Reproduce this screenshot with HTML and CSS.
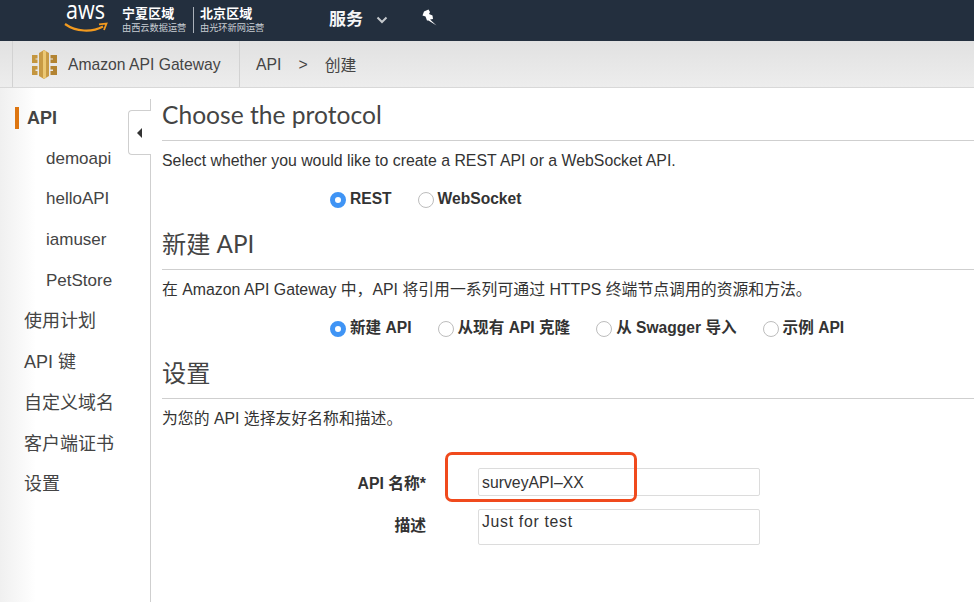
FILE: index.html
```html
<!DOCTYPE html>
<html lang="zh">
<head>
<meta charset="utf-8">
<title>Amazon API Gateway</title>
<link rel="stylesheet" href="styles.css">
</head>
<body>
<header class="topbar">
  <svg class="logo" width="44" height="41" viewBox="0 0 44 41">
    <text class="logo-text" x="2" y="18.500" textLength="39" lengthAdjust="spacingAndGlyphs">aws</text>
    <path d="M1 24C12 32 28 32.500 39 26.500" fill="none" stroke="#f29a1f" stroke-width="2.200"/>
    <path d="M35 24.300L42.500 23.500L40 30" fill="none" stroke="#f29a1f" stroke-width="1.800"/>
  </svg>
  <div class="region"><strong>宁夏区域</strong><small>由西云数据运营</small></div>
  <div class="region region-b"><strong>北京区域</strong><small>由光环新网运营</small></div>
  <div class="services">服务</div>
  <svg class="chev" width="12" height="8" viewBox="0 0 12 8"><path d="M1.500 1.500L6 6L10.500 1.500" fill="none" stroke="#c4c8cc" stroke-width="2"/></svg>
  <svg class="pin" width="15" height="17" viewBox="0 0 15 17"><path d="M2 2.500L6.500 0.500L8 3L7 5L10.500 6.500L11 10L8 10.500L14.500 16.500L6.500 11.500L5 11.500L3.500 7.500L0.500 6.500Z" fill="#fff"/></svg>
</header>
<nav class="subbar">
  <div class="brand">
    <svg class="gw" width="25" height="29" viewBox="0 0 25 29">
      <path d="M7 3L12 0L17 3V26L12 29L7 26Z" fill="#c89b45"/>
      <path d="M11 1L12 0L14 1.500V27.500L12 29L11 28Z" fill="#ecc873"/>
      <path d="M0 5H5.500V8.500H3.500V9.500H5.500V13H0Z" fill="#c4963f"/>
      <path d="M0 16H5.500V19.500H3.500V21H5.500V25H0Z" fill="#c4963f"/>
      <path d="M25 5H18.500V8.500H21V9.500H18.500V13H25Z" fill="#b38432"/>
      <path d="M25 16H18.500V19.500H21V21H18.500V25H25Z" fill="#b38432"/>
    </svg>
    <span>Amazon API Gateway</span>
  </div>
  <div class="crumbs"><span>API</span><span class="sep">&gt;</span><span>创建</span></div>
</nav>
<div class="content">
  <aside class="sidebar">
    <a class="item active">API</a>
    <a class="item sub">demoapi</a>
    <a class="item sub">helloAPI</a>
    <a class="item sub">iamuser</a>
    <a class="item sub">PetStore</a>
    <a class="item">使用计划</a>
    <a class="item">API 键</a>
    <a class="item">自定义域名</a>
    <a class="item">客户端证书</a>
    <a class="item">设置</a>
    <div class="handle"><i></i></div>
  </aside>
  <main class="main">
    <section class="sec sec-first">
      <h2 class="latin">Choose the protocol</h2>
      <p>Select whether you would like to create a REST API or a WebSocket API.</p>
      <div class="radios">
        <label class="radio on">REST</label>
        <label class="radio">WebSocket</label>
      </div>
    </section>
    <section class="sec">
      <h2>新建 API</h2>
      <p>在 Amazon API Gateway 中，API 将引用一系列可通过 HTTPS 终端节点调用的资源和方法。</p>
      <div class="radios">
        <label class="radio on">新建 API</label>
        <label class="radio">从现有 API 克隆</label>
        <label class="radio">从 Swagger 导入</label>
        <label class="radio">示例 API</label>
      </div>
    </section>
    <section class="sec">
      <h2>设置</h2>
      <p>为您的 API 选择友好名称和描述。</p>
      <div class="form">
        <div class="row">
          <label class="lab">API 名称*</label>
          <div class="field input">surveyAPI–XX</div>
        </div>
        <div class="row row-b">
          <label class="lab lab-b">描述</label>
          <div class="field area">Just for test</div>
        </div>
        <div class="mark"></div>
      </div>
    </section>
  </main>
</div>
</body>
</html>
```
FILE: styles.css
```css
*, *::before, *::after { box-sizing: border-box; }
html, body { margin: 0; height: 100%; overflow: hidden; }
body {
  width: 974px; height: 602px; background: #fff; color: #333;
  font-family: "Liberation Sans", "Noto Sans CJK SC", sans-serif; font-size: 16px;
}
.topbar {
  height: 41px; background: #232f3e; display: flex; align-items: center;
  padding-left: 64px; color: #fff;
}
.logo { flex: none; margin-right: 14px; }
.logo-text { font: 400 25px "Open Sans", sans-serif; fill: #fff; }
.region { display: flex; flex-direction: column; width: 71px; line-height: 1; height: 26px; margin-top: -1px; }
.region strong { font-size: 13px; font-weight: 700; letter-spacing: .1px; margin-bottom: 4px; }
.region small { font-size: 9.200px; color: #c9ced4; white-space: nowrap; }
.region-b { padding-left: 6px; border-left: 1px solid #aab1b9; width: 78px; }
.services { font-size: 17px; font-weight: 700; margin-left: 58px; color: #f4f5f6; margin-top: -6px; }
.chev { margin-left: 13px; margin-top: -2px; }
.pin { margin-left: 34px; margin-top: -6px; }

.subbar {
  height: 47px; display: flex; align-items: stretch;
  background: linear-gradient(#e1e1e1, #ededed); border-bottom: 1px solid #d8d8d8;
  padding-left: 12px; color: #444;
}
.brand {
  width: 228px; display: flex; align-items: center; gap: 11px; padding-left: 19px;
  border-left: 1px solid #d2d2d2; border-right: 1px solid #d2d2d2;
  font-size: 15.700px;
}
.brand span { margin-top: 1px; }
.crumbs { display: flex; align-items: center; padding: 1px 0 0 16px; font-size: 15.800px; }
.crumbs .sep { margin: 0 17px; }

.content { display: flex; height: 514px; }
.sidebar {
  width: 151px; flex: none; position: relative; padding-top: 10px;
  background: linear-gradient(90deg, #f0f0f0, #fff 36px);
}
.sidebar::after {
  content: ""; position: absolute; right: 0; top: 11px; bottom: 0; width: 1px; background: #cfcfcf;
}
.item {
  display: block; height: 40.700px; line-height: 40px; padding-left: 24px;
  font-size: 18px; color: #444; white-space: nowrap;
}
.item.sub { padding-left: 46px; font-size: 17px; }
.item.active { font-weight: 700; padding-left: 27px; position: relative; }
.item.active::before {
  content: ""; position: absolute; left: 15px; top: 9px; width: 4px; height: 22px; background: #dd7510;
}
.handle {
  position: absolute; left: 128px; top: 22px; width: 23px; height: 45px; background: #fff;
  border: 1px solid #cfcfcf; border-right: 0; border-radius: 4px 0 0 4px; z-index: 1;
}
.handle i {
  position: absolute; left: 8px; top: 17px; width: 0; height: 0;
  border-style: solid; border-color: transparent #333 transparent transparent;
  border-width: 5px 5px 5px 0;
}

.main { flex: 1; padding-left: 11px; min-width: 0; }
.sec { height: 129px; }
.sec-first { height: 138px; padding-top: 9px; }
.sec h2 {
  margin: 0 0 9px; font: 400 24.200px/36px "Lato", "Noto Sans CJK SC", sans-serif; color: #444;
  border-bottom: 1px solid #cfcfcf; height: 44px;
}
.sec h2.latin { font-size: 24.600px; }
.sec p { margin: 0; font-size: 15.850px; line-height: 22px; color: #333; white-space: nowrap; }
.radios { display: flex; gap: 26px; margin: 16px 0 0 168px; }
.radio { display: flex; align-items: center; gap: 4px; font-size: 15.600px; font-weight: 700; color: #333; line-height: 22px; }
.radio::before {
  content: ""; width: 16px; height: 16px; border-radius: 50%; background: #fff;
  border: 1px solid #bdbdbd; margin-top: 1px; flex: none;
}
.radio.on::before { border: 5px solid #3f94f5; }

.form { position: relative; margin-top: 38px; }
.row { display: flex; align-items: center; height: 28px; }
.row-b { margin-top: 13px; height: 36px; align-items: flex-start; }
.lab { width: 264px; text-align: right; font-size: 15.800px; font-weight: 700; color: #333; margin-top: 1px; }
.lab-b { margin-top: 4px; }
.field {
  margin-left: 52px; width: 282px; border: 1px solid #dcdcdc; border-radius: 2px;
  padding-left: 3px; font-size: 15.800px; color: #333;
}
.input { height: 28px; line-height: 27px; }
.area { height: 36px; line-height: 23px; letter-spacing: .7px; }
.mark {
  position: absolute; left: 283px; top: -16px; width: 192px; height: 50px;
  border: 3px solid #f04a1d; border-radius: 7px; pointer-events: none;
}
```
